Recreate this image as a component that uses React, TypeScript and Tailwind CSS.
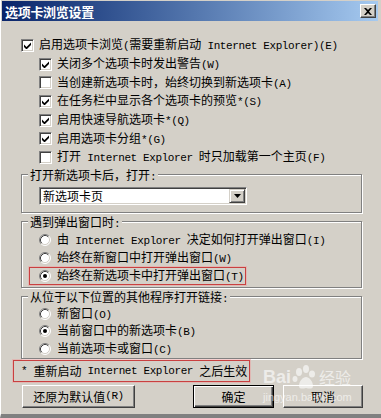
import React from 'react'

// mixed CJK / ascii text: ascii runs get the narrow mono face like SimSun half-width
function Tx({ s }: { s: string }) {
  const parts = s.split(/([\x20-\x7e]+)/).filter(Boolean)
  return (
    <>
      {parts.map((p, i) =>
        /^[\x20-\x7e]+$/.test(p) ? (
          <span key={i} className="whitespace-pre [font-family:'Liberation_Mono',monospace] text-[11px] tracking-[-0.4px]">
            {p}
          </span>
        ) : (
          <span key={i}>{p}</span>
        )
      )}
    </>
  )
}

function Check({ on }: { on?: boolean }) {
  return (
    <span className="w-[13px] h-[13px] shrink-0 bg-white border border-t-[#808080] border-l-[#808080] border-r-white border-b-white shadow-[inset_1px_1px_0_#404040,inset_-1px_-1px_0_#d4d0c8] flex items-center justify-center">
      {on && (
        <svg width="7" height="7" viewBox="0 0 7 7">
          <path d="M0 2.5L2.5 5L7 0.5V3L2.5 7.5L0 5Z" fill="#000" />
        </svg>
      )}
    </span>
  )
}

function Radio({ on }: { on?: boolean }) {
  return (
    <svg width="12" height="12" viewBox="0 0 12 12" className="shrink-0">
      <circle cx="6" cy="6" r="5" fill="#fff" />
      <path d="M2.11 9.89A5.5 5.5 0 0 1 9.89 2.11" fill="none" stroke="#808080" />
      <path d="M9.89 2.11A5.5 5.5 0 0 1 2.11 9.89" fill="none" stroke="#fff" />
      <path d="M2.82 9.18A4.5 4.5 0 0 1 9.18 2.82" fill="none" stroke="#404040" />
      <path d="M9.18 2.82A4.5 4.5 0 0 1 2.82 9.18" fill="none" stroke="#d4d0c8" />
      {on && <circle cx="6" cy="6" r="2" fill="#000" />}
    </svg>
  )
}

function CheckRow({ on, sub, text }: { on?: boolean; sub?: boolean; text: string }) {
  return (
    <div className={`h-[18.7px] flex items-center gap-[5px] ${sub ? 'pl-[37px]' : 'pl-[19px]'}`}>
      <Check on={on} />
      <span className="whitespace-nowrap">
        <Tx s={text} />
      </span>
    </div>
  )
}

function RadioRow({ on, text, tall }: { on?: boolean; text: string; tall?: boolean }) {
  return (
    <div className={`flex items-center gap-[6px] pl-[11px] ${tall ? 'h-[18px]' : 'h-[17.5px]'}`}>
      <Radio on={on} />
      <span className="whitespace-nowrap">
        <Tx s={text} />
      </span>
    </div>
  )
}

function Group({ label, className, children }: { label: string; className: string; children: React.ReactNode }) {
  return (
    <fieldset
      className={`ml-[19px] w-[341px] px-[6px] border border-[#808080] shadow-[1px_1px_0_#fff,inset_1px_1px_0_#fff] ${className}`}
    >
      <legend className="px-[2px] h-[14px] leading-[14px] bg-[#d4d0c8]">
        <Tx s={label} />
      </legend>
      {children}
    </fieldset>
  )
}

function Btn({ children, def, className }: { children: React.ReactNode; def?: boolean; className: string }) {
  return (
    <button
      className={`h-[23px] bg-[#d4d0c8] flex items-center justify-center ${
        def
          ? 'border border-black shadow-[inset_1px_1px_0_#fff,inset_-1px_-1px_0_#404040,inset_-2px_-2px_0_#808080]'
          : 'border border-t-white border-l-white border-r-[#404040] border-b-[#404040] shadow-[inset_-1px_-1px_0_#808080]'
      } ${className}`}
    >
      {children}
    </button>
  )
}

export default function App() {
  return (
    <div className="relative w-[381px] h-[418px] overflow-hidden bg-[#d4d0c8] flex flex-col pt-[1px] pl-[1px] pr-[3px] border-l border-l-white border-b-4 border-b-[#808080] [font-family:'Noto_Sans_CJK_SC',sans-serif] text-[12px] leading-none text-black">
      {/* title bar */}
      <div className="h-[20px] shrink-0 flex items-center justify-between pl-[3px] pr-[2px] bg-linear-to-r from-[#0a246a] to-[#a6caf0]">
        <span className="text-white font-bold text-[13px] tracking-[-0.3px]">选项卡浏览设置</span>
        <span className="w-[16px] h-[14px] bg-[#d4d0c8] border border-t-white border-l-white border-r-[#404040] border-b-[#404040] shadow-[inset_-1px_-1px_0_#808080] flex items-center justify-center">
          <svg width="8" height="7" viewBox="0 0 8 7">
            <path d="M0 0h2l2 2 2-2h2L5 3.5 8 7H6L4 5 2 7H0l3-3.5z" fill="#000" />
          </svg>
        </span>
      </div>

      <div className="flex-1 flex flex-col pt-[15px]">
        <CheckRow on text="启用选项卡浏览(需要重新启动 Internet Explorer)(E)" />
        <CheckRow on sub text="关闭多个选项卡时发出警告(W)" />
        <CheckRow sub text="当创建新选项卡时，始终切换到新选项卡(A)" />
        <CheckRow on sub text="在任务栏中显示各个选项卡的预览*(S)" />
        <CheckRow on sub text="启用快速导航选项卡*(Q)" />
        <CheckRow on sub text="启用选项卡分组*(G)" />
        <CheckRow sub text="打开 Internet Explorer 时只加载第一个主页(F)" />

        <Group label="打开新选项卡后，打开:" className="mt-[1px] pt-[5px] pb-[7px]">
          <div className="pl-[11px]">
            <div className="w-[208px] h-[18px] bg-white border border-t-[#808080] border-l-[#808080] border-r-white border-b-white shadow-[inset_1px_1px_0_#404040,inset_-1px_-1px_0_#d4d0c8] flex items-center p-[1px]">
              <span className="flex-1 pl-[2px]">新选项卡页</span>
              <span className="w-[16px] h-[14px] bg-[#d4d0c8] border border-t-[#d4d0c8] border-l-[#d4d0c8] border-r-[#404040] border-b-[#404040] shadow-[inset_1px_1px_0_#fff,inset_-1px_-1px_0_#808080] flex items-center justify-center">
                <svg width="7" height="4" viewBox="0 0 7 4">
                  <path d="M0 0h7L3.5 4z" fill="#000" />
                </svg>
              </span>
            </div>
          </div>
        </Group>

        <Group label="遇到弹出窗口时:" className="mt-[2px] pt-[2px] pb-[2px]">
          <RadioRow tall text="由 Internet Explorer 决定如何打开弹出窗口(I)" />
          <RadioRow tall text="始终在新窗口中打开弹出窗口(W)" />
          <div className="ml-[1px] w-[217px] h-[18px] flex items-center gap-[6px] pl-[9px] border border-[#c94040] shadow-[0_0_0_1px_rgba(235,160,160,0.5)]">
            <Radio on />
            <span className="whitespace-nowrap">
              <Tx s="始终在新选项卡中打开弹出窗口(T)" />
            </span>
          </div>
        </Group>

        <Group label="从位于以下位置的其他程序打开链接:" className="mt-[2px] pt-[1px] pb-[1px]">
          <RadioRow text="新窗口(O)" />
          <RadioRow on text="当前窗口中的新选项卡(B)" />
          <RadioRow text="当前选项卡或窗口(C)" />
        </Group>

        <div className="ml-[11px] w-[237px] h-[22px] mt-[1px] flex items-center pl-[7px] border border-[#c94040] shadow-[0_0_0_1px_rgba(235,160,160,0.5)] whitespace-nowrap">
          <Tx s="* 重新启动 Internet Explorer 之后生效" />
        </div>

        <div className="flex mt-[3px]">
          <Btn className="ml-[20px] w-[113px]">
            <Tx s="还原为默认值(R)" />
          </Btn>
          <Btn def className="ml-[58px] w-[81px]">
            确定
          </Btn>
          <Btn className="ml-[9px] w-[80px]">取消</Btn>
        </div>
      </div>

      {/* baidu jingyan watermark */}
      <div className="pointer-events-none absolute left-[262px] top-[364px] flex flex-col items-start text-white opacity-60">
        <div className="flex items-center">
          <span className="[font-family:'Liberation_Sans',sans-serif] font-bold text-[18px] leading-none">Bai</span>
          <svg width="28" height="26" viewBox="0 0 28 26">
            <ellipse cx="8" cy="8" rx="3" ry="4" fill="#fff" />
            <ellipse cx="15" cy="5" rx="3" ry="4" fill="#fff" />
            <ellipse cx="21" cy="10" rx="3" ry="3.5" fill="#fff" />
            <ellipse cx="4" cy="15" rx="2.5" ry="3" fill="#fff" />
            <path d="M8 22c0-5 4-9 7-9s7 4 7 9c0 3-3 3-7 2-4 1-7 1-7-2z" fill="#fff" />
          </svg>
          <span className="text-[16px] leading-none">经验</span>
        </div>
        <span className="[font-family:'Liberation_Sans',sans-serif] text-[11px] leading-none mt-[2px]">jingyan.baidu.com</span>
      </div>
    </div>
  )
}
